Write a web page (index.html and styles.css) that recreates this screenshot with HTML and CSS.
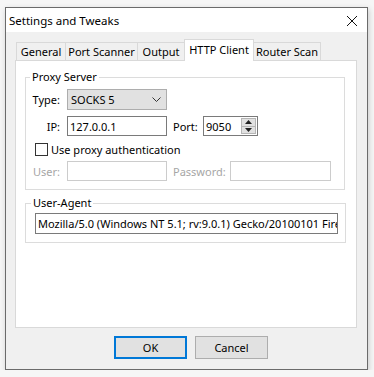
FILE: index.html
```html
<!DOCTYPE html>
<html lang="en">
  <head>
    <meta charset="UTF-8" />
    <title>Settings and Tweaks</title>
    <link rel="stylesheet" href="styles.css">
  </head>
  <body>
    <div class="window">
      <div class="titlebar">
        <span class="title">Settings and Tweaks</span>
        <svg class="close" width="12" height="12" viewBox="0 0 12 12">
          <path d="M1 1 L11 11 M11 1 L1 11" stroke="#111" stroke-width="1" fill="none" />
        </svg>
      </div>
      <div class="content">
        <div class="tabs">
          <div class="tab t-general">General</div>
          <div class="tab t-port">Port Scanner</div>
          <div class="tab t-output">Output</div>
          <div class="tab active t-http">HTTP Client</div>
          <div class="tab t-router">Router Scan</div>
        </div>
        <div class="panel">
          <fieldset class="group proxy">
            <legend>Proxy Server</legend>
            <div class="rows">
              <div class="row r-type">
                <span class="lbl">Type:</span>
                <div class="combo">
                  <span>SOCKS 5</span>
                  <svg width="9" height="6" viewBox="0 0 9 6">
                    <path d="M0.5 0.5 L4.5 4.5 L8.5 0.5" stroke="#333" stroke-width="1" fill="none" />
                  </svg>
                </div>
              </div>
              <div class="row r-ip">
                <span class="lbl">IP:</span>
                <div class="input ip">127.0.0.1</div>
                <span class="lbl2 port-lbl">Port:</span>
                <div class="input port">
                  <span>9050</span>
                  <div class="spin">
                    <div class="arrow">
                      <svg width="7" height="4" viewBox="0 0 7 4"><path d="M0 4 L3.5 0 L7 4 Z" fill="#222" /></svg>
                    </div>
                    <div class="arrow">
                      <svg width="7" height="4" viewBox="0 0 7 4"><path d="M0 0 L3.5 4 L7 0 Z" fill="#222" /></svg>
                    </div>
                  </div>
                </div>
              </div>
              <div class="row r-check">
                <span class="checkbox"></span>
                <span>Use proxy authentication</span>
              </div>
              <div class="row r-user">
                <span class="lbl dim">User:</span>
                <div class="input off user"></div>
                <span class="lbl2 pass-lbl dim">Password:</span>
                <div class="input off pass"></div>
              </div>
            </div>
          </fieldset>
          <fieldset class="group agent">
            <legend>User-Agent</legend>
            <div class="input ua">Mozilla/5.0 (Windows NT 5.1; rv:9.0.1) Gecko/20100101 Firefox/9.0.1</div>
          </fieldset>
        </div>
        <div class="buttons">
          <div class="btn default">OK</div>
          <div class="btn">Cancel</div>
        </div>
      </div>
    </div>
  </body>
</html>
```
FILE: styles.css
```css
body {
  margin: 0;
  padding: 0;
  background-color: #f6f6f6;
  font-family: "Noto Sans", "Open Sans", sans-serif;
  font-size: 11px;
  color: #000;
}

.window {
  box-sizing: border-box;
  width: 363px;
  height: 363px;
  margin: 7px 0 0 5px;
  border: 1px solid #6b6b6b;
  background-color: #f0f0f0;
  box-shadow: 1px 2px 6px rgba(0, 0, 0, 0.18);
  display: flex;
  flex-direction: column;
}

.titlebar {
  height: 24px;
  flex: none;
  background-color: #fff;
  display: flex;
  align-items: center;
  justify-content: space-between;
  padding: 0 9px 0 3px;
  .title {
    font-size: 11.5px;
  }
  .close {
    margin-top: 1px;
  }
}

.content {
  flex: 1;
  padding: 7px 10px 0 9px;
}

.tabs {
  display: flex;
  align-items: flex-end;
  height: 21px;
  padding-left: 1px;
  position: relative;
  z-index: 1;
  .tab {
    box-sizing: border-box;
    height: 18px;
    border: 1px solid #d9d9d9;
    border-bottom: none;
    border-right: none;
    background-color: #f0f0f0;
    display: flex;
    align-items: center;
    justify-content: center;
  }
  .t-router {
    border-right: 1px solid #d9d9d9;
  }
  .active {
    height: 22px;
    margin-bottom: -1px;
    background-color: #fff;
    border-right: 1px solid #d9d9d9;
    padding-bottom: 2px;
  }
  .active + .tab {
    border-left: none;
  }
  .t-general { width: 49px; }
  .t-port { width: 72px; }
  .t-output { width: 47px; }
  .t-http { width: 70px; }
  .t-router { width: 67px; }
}

.panel {
  box-sizing: border-box;
  height: 268px;
  border: 1px solid #d9d9d9;
  background-color: #fff;
  padding: 9px 11px 0 9px;
}

.group {
  margin: 0;
  padding: 0;
  border: 1px solid #dcdcdc;
  legend {
    padding: 0 2px;
    margin-left: 4px;
    line-height: 14px;
    color: #000;
  }
}

.rows {
  padding: 5px 0 8px 0;
  display: flex;
  flex-direction: column;
}

.row {
  display: flex;
  align-items: center;
}

.r-ip {
  margin-top: 6px;
}

.r-check {
  margin-top: 7px;
  height: 13px;
  padding-left: 9px;
  .checkbox {
    box-sizing: border-box;
    width: 13px;
    height: 13px;
    border: 1px solid #333;
    background-color: #fff;
    margin-right: 3px;
  }
}

.r-user {
  margin-top: 5px;
}

.lbl {
  width: 34px;
  margin-right: 7px;
  text-align: right;
}

.lbl2 {
  margin-left: 6px;
}

.port-lbl {
  width: 30px;
}

.pass-lbl {
  width: 57px;
}

.dim {
  color: #a6a6a6;
}

.combo {
  box-sizing: border-box;
  width: 100px;
  height: 21px;
  border: 1px solid #adadad;
  background-color: #e1e1e1;
  display: flex;
  align-items: center;
  justify-content: space-between;
  padding: 0 5px 0 3px;
}

.input {
  box-sizing: border-box;
  height: 20px;
  border: 1px solid #7a7a7a;
  background-color: #fff;
  display: flex;
  align-items: center;
  padding-left: 2px;
  white-space: nowrap;
  overflow: hidden;
}

.ip {
  width: 100px;
}

.port {
  width: 55px;
  justify-content: space-between;
  padding-right: 1px;
  .spin {
    width: 15px;
    height: 16px;
    display: flex;
    flex-direction: column;
    .arrow {
      flex: 1;
      background-color: #e1e1e1;
      border: 1px solid #b5b5b5;
      display: flex;
      align-items: center;
      justify-content: center;
    }
    .arrow + .arrow {
      border-top: none;
    }
  }
}

.off {
  border-color: #cccccc;
}

.user {
  width: 100px;
}

.pass {
  width: 101px;
}

.agent {
  margin-top: 6px;
  padding: 3px 7px 8px 9px;
  legend {
    margin-left: -4px;
  }
  .ua {
    height: 21px;
    width: 303px;
  }
}

.buttons {
  display: flex;
  justify-content: center;
  gap: 8px;
  padding: 8px 0 0 10px;
  .btn {
    box-sizing: border-box;
    width: 73px;
    height: 23px;
    border: 1px solid #adadad;
    background-color: #e1e1e1;
    display: flex;
    align-items: center;
    justify-content: center;
  }
  .default {
    border: 2px solid #0078d7;
  }
}
```
